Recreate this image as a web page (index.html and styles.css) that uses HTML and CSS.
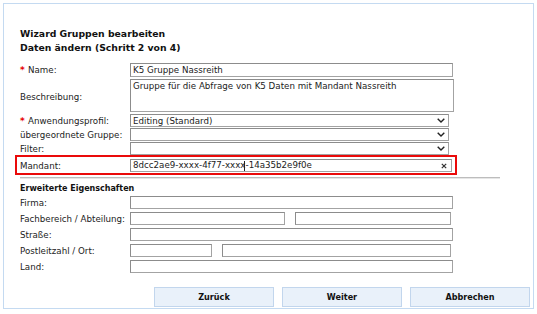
FILE: index.html
```html
<!DOCTYPE html>
<html lang="de">
<head>
<meta charset="utf-8">
<title>Wizard Gruppen bearbeiten</title>
<link rel="stylesheet" href="styles.css">
</head>
<body>
<div class="panel">
  <div class="title">Wizard Gruppen bearbeiten<br>Daten ändern (Schritt 2 von 4)</div>

  <div class="row r-name">
    <div class="lbl"><span class="req">*</span>Name:</div>
    <div class="field w-full">K5 Gruppe Nassreith</div>
  </div>

  <div class="row r-desc">
    <div class="lbl">Beschreibung:</div>
    <div class="field area">Gruppe für die Abfrage von K5 Daten mit Mandant Nassreith</div>
  </div>

  <div class="row r-sel1">
    <div class="lbl"><span class="req">*</span>Anwendungsprofil:</div>
    <div class="field sel"><span>Editing (Standard)</span><svg class="chev" width="8" height="5" viewBox="0 0 8 5"><path d="M0.7 0.7 L4 4 L7.3 0.7" fill="none" stroke="#222" stroke-width="1.4"/></svg></div>
  </div>

  <div class="row r-sel">
    <div class="lbl">übergeordnete Gruppe:</div>
    <div class="field sel"><span></span><svg class="chev" width="8" height="5" viewBox="0 0 8 5"><path d="M0.7 0.7 L4 4 L7.3 0.7" fill="none" stroke="#222" stroke-width="1.4"/></svg></div>
  </div>

  <div class="row r-sel">
    <div class="lbl">Filter:</div>
    <div class="field sel"><span></span><svg class="chev" width="8" height="5" viewBox="0 0 8 5"><path d="M0.7 0.7 L4 4 L7.3 0.7" fill="none" stroke="#222" stroke-width="1.4"/></svg></div>
  </div>

  <div class="row hilite">
    <div class="lbl">Mandant:</div>
    <div class="field mandant"><span>8dcc2ae9-xxxx-4f77-xxxx<span class="caret"></span>-14a35b2e9f0e</span><svg class="clear" width="6" height="6" viewBox="0 0 6 6"><path d="M0.8 0.8 L5.2 5.2 M5.2 0.8 L0.8 5.2" stroke="#333" stroke-width="1.2"/></svg></div>
  </div>

  <div class="sep"></div>

  <div class="section">Erweiterte Eigenschaften</div>

  <div class="row r-ext first">
    <div class="lbl">Firma:</div>
    <div class="field w-full"></div>
  </div>
  <div class="row r-ext">
    <div class="lbl">Fachbereich / Abteilung:</div>
    <div class="pair">
      <div class="field w-fach1"></div>
      <div class="field w-fach2"></div>
    </div>
  </div>
  <div class="row r-ext">
    <div class="lbl">Straße:</div>
    <div class="field w-full"></div>
  </div>
  <div class="row r-ext">
    <div class="lbl">Postleitzahl / Ort:</div>
    <div class="pair">
      <div class="field w-plz"></div>
      <div class="field w-ort"></div>
    </div>
  </div>
  <div class="row r-ext">
    <div class="lbl">Land:</div>
    <div class="field w-full"></div>
  </div>

  <div class="buttons">
    <div class="btn">Zurück</div>
    <div class="btn">Weiter</div>
    <div class="btn">Abbrechen</div>
  </div>
</div>
</body>
</html>
```

FILE: styles.css
```css
html, body {
  margin: 0;
  padding: 0;
  background: #ffffff;
}

body {
  font-family: "DejaVu Sans", Verdana, sans-serif;
  color: #222;
}

.panel {
  margin: 3px 0 0 3px;
  width: 531px;
  height: 306px;
  box-sizing: border-box;
  border: 1px solid #c4daf1;
  padding: 23px 2px 0 11px;
  background: #fff;
}

.title {
  padding-left: 5px;
  font-weight: bold;
  font-size: 9.3px;
  line-height: 14px;
  color: #111;
}

.row {
  display: flex;
  align-items: center;
  padding-left: 5px;
}

.lbl {
  width: 110px;
  flex: none;
  font-size: 8.7px;
  line-height: 10px;
  color: #222;
  white-space: nowrap;
}

.req {
  display: inline-block;
  width: 8px;
  color: #e60000;
  font-weight: bold;
  font-size: 9px;
}

.field {
  box-sizing: border-box;
  height: 13px;
  border: 1px solid #a3a3a3;
  border-top-color: #8c8c8c;
  border-left-color: #8c8c8c;
  background: #fff;
  font-size: 8.7px;
  line-height: 10px;
  padding: 0 2px;
  display: flex;
  align-items: center;
  white-space: nowrap;
  color: #222;
}

.w-full { width: 323px; }

.r-name { margin-top: 8px; }
.r-name .field { height: 14px; }

.r-desc { margin-top: 2px; }
.area {
  width: 324px;
  height: 33px;
  align-items: flex-start;
  padding-top: 1px;
}
.r-desc .lbl { padding-top: 3px; }

.r-sel1 { margin-top: 2px; }
.r-sel { margin-top: 1px; }

.sel {
  width: 319px;
  justify-content: space-between;
  padding-right: 3px;
}

.chev { display: block; flex: none; }

.hilite {
  width: 442px;
  box-sizing: border-box;
  border: 2px solid #ea0a0a;
  padding: 2px 3px 1px 3px;
}

.mandant {
  width: 322px;
  justify-content: space-between;
  padding-right: 4px;
}

.caret {
  display: inline-block;
  width: 1px;
  height: 10px;
  background: #222;
  vertical-align: middle;
  margin-left: -2px;
  margin-right: 1px;
}

.clear { display: block; flex: none; }

.sep {
  margin: 2px 0 0 5px;
  width: 480px;
  height: 1px;
  background: #bdbdbd;
  border-bottom: 1px solid #e6e6e6;
}

.section {
  margin-top: 3px;
  padding-left: 5px;
  font-weight: bold;
  font-size: 8px;
  line-height: 14px;
  color: #111;
}

.r-ext { margin-top: 3px; }
.r-ext.first { margin-top: 0; }

.pair {
  display: flex;
  gap: 10px;
}

.w-fach1 { width: 155px; }
.w-fach2 { width: 156px; }
.w-plz { width: 82px; }
.w-ort { width: 229px; }

.buttons {
  margin-top: 14px;
  display: flex;
  justify-content: flex-end;
  gap: 8px;
  padding-right: 1px;
}

.btn {
  box-sizing: border-box;
  width: 120px;
  height: 20px;
  border: 1px solid #c2d6ed;
  background: #e9f1fa;
  font-weight: bold;
  font-size: 8.1px;
  color: #111;
  display: flex;
  align-items: center;
  justify-content: center;
}
```
